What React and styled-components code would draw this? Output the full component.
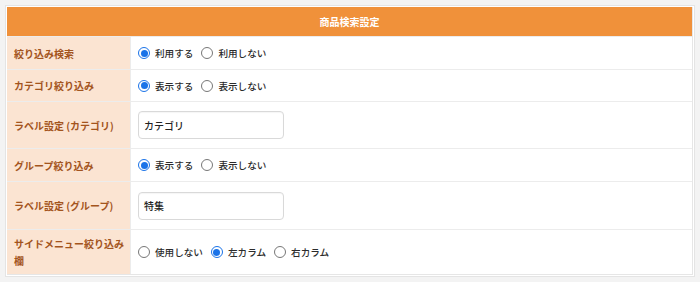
import React from "react";
import styled, { createGlobalStyle } from "styled-components";

const Global = createGlobalStyle`
  html, body { margin: 0; padding: 0; background: #f3f3f3; }
  body { font-family: "Noto Sans CJK JP", "Noto Sans", sans-serif; }
`;

const Frame = styled.div`
  margin: 5px 5px 0 5px;
  width: 690px;
  box-sizing: border-box;
  background: #fff;
  border: 1px solid #e4e4e4;
  padding: 1px;
`;

const Table = styled.div`
  display: grid;
  grid-template-columns: 123px 1fr;
  border-right: 1px solid #e6e6e6;
  border-bottom: 1px solid #e6e6e6;
`;

const Header = styled.div`
  grid-column: 1 / -1;
  height: 29px;
  background: #f0913a;
  color: #fff;
  font-size: 10px;
  font-weight: 700;
  display: flex;
  align-items: center;
  justify-content: center;
`;

const Label = styled.div`
  background: #fbe4d2;
  color: #a3541d;
  font-size: 10px;
  font-weight: 700;
  line-height: 17px;
  padding: 0 6px 0 7px;
  display: flex;
  align-items: center;
  min-height: ${(p) => p.$h}px;
  border-top: 1px solid #ececec;
  box-sizing: border-box;
`;

const Cell = styled.div`
  display: flex;
  align-items: center;
  padding: 0 7px;
  min-height: ${(p) => p.$h}px;
  border-top: 1px solid #ececec;
  border-left: 1px solid #ececec;
  box-sizing: border-box;
  background: #fff;
`;

const RadioGroup = styled.div`
  display: flex;
  align-items: center;
  gap: 8px;
`;

const Option = styled.label`
  display: flex;
  align-items: center;
  gap: 5px;
  font-size: 9.6px;
  font-weight: 500;
  color: #2b2b2b;
`;

const Radio = styled.span`
  width: 12px;
  height: 12px;
  box-sizing: border-box;
  border-radius: 50%;
  border: ${(p) => (p.$on ? "1.5px solid #1a73e8" : "1.2px solid #777")};
  background: #fff;
  display: flex;
  align-items: center;
  justify-content: center;
  &::after {
    content: "";
    width: 7px;
    height: 7px;
    border-radius: 50%;
    background: ${(p) => (p.$on ? "#1a73e8" : "transparent")};
  }
`;

const TextBox = styled.div`
  width: 146px;
  height: 28px;
  box-sizing: border-box;
  border: 1px solid #d9d9d9;
  border-radius: 4px;
  font-size: 10px;
  font-weight: 500;
  color: #222;
  display: flex;
  align-items: center;
  padding: 0 5px;
  box-shadow: inset 0 1px 1px rgba(0,0,0,0.04);
`;

const Radios = ({ options, checked }) => (
  <RadioGroup>
    {options.map((o, i) => (
      <Option key={o}>
        <Radio $on={i === checked} />
        {o}
      </Option>
    ))}
  </RadioGroup>
);

const rows = [
  { label: "絞り込み検索", h: 33, radios: ["利用する", "利用しない"], checked: 0 },
  { label: "カテゴリ絞り込み", h: 32, radios: ["表示する", "表示しない"], checked: 0 },
  { label: "ラベル設定 (カテゴリ)", h: 47, input: "カテゴリ" },
  { label: "グループ絞り込み", h: 33, radios: ["表示する", "表示しない"], checked: 0 },
  { label: "ラベル設定 (グループ)", h: 48, input: "特集" },
  { label: "サイドメニュー絞り込み欄", h: 45, radios: ["使用しない", "左カラム", "右カラム"], checked: 1 },
];

export default function App() {
  return (
    <>
      <Global />
      <Frame>
        <Table>
          <Header>商品検索設定</Header>
          {rows.map((r) => (
            <React.Fragment key={r.label}>
              <Label $h={r.h}>{r.label}</Label>
              <Cell $h={r.h}>
                {r.input ? <TextBox>{r.input}</TextBox> : <Radios options={r.radios} checked={r.checked} />}
              </Cell>
            </React.Fragment>
          ))}
        </Table>
      </Frame>
    </>
  );
}
